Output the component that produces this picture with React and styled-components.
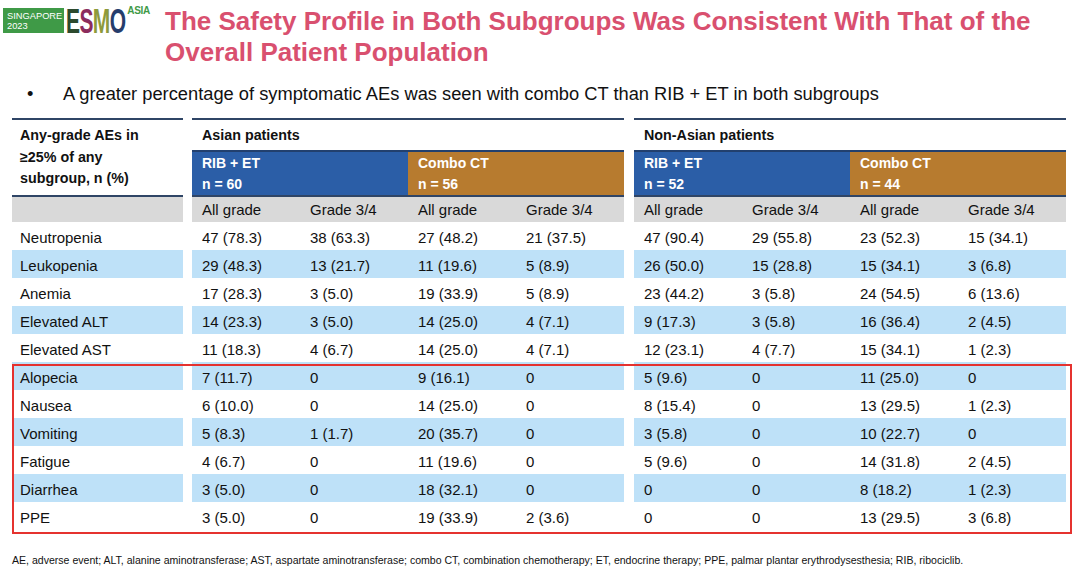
import React from 'react';
import styled, { createGlobalStyle } from 'styled-components';

const GlobalStyle = createGlobalStyle`
  body {
    margin: 0;
    background: #fff;
    font-family: "Liberation Sans", Arial, sans-serif;
    color: #111;
  }
`;

const Page = styled.div`
  width: 1080px;
  height: 571px;
  overflow: hidden;
  position: relative;
`;

const Header = styled.div`
  display: flex;
  align-items: flex-start;
  padding: 6px 0 0 3px;
`;

const Logo = styled.div`
  display: flex;
  align-items: flex-start;
  margin-top: 2px;
  width: 147px;
  flex-shrink: 0;
`;

const CityBox = styled.div`
  width: 64px;
  height: 25px;
  background: #3f9a47;
  color: #fff;
  font-size: 9.3px;
  line-height: 10px;
  padding: 3px 0 0 4px;
  box-sizing: border-box;
`;

const Esmo = styled.div`
  width: 60px;
  height: 25px;
  margin-left: 2px;
  font-size: 35px;
  font-weight: 700;
  line-height: 26px;
  letter-spacing: -1px;
  transform: scaleX(0.6);
  transform-origin: left top;
  white-space: nowrap;
`;

const Letter = styled.span`
  color: ${({ $c }) => $c};
`;

const AsiaTag = styled.div`
  font-size: 10px;
  font-weight: 700;
  color: #3f9a47;
  margin: -3px 0 0 1px;
  letter-spacing: -0.3px;
`;

const Title = styled.h1`
  margin: 0 0 0 15px;
  font-size: 26px;
  line-height: 31px;
  font-weight: 700;
  color: #d9506f;
`;

const Bullet = styled.div`
  display: flex;
  margin: 15px 0 0 27px;
  font-size: 18.3px;
  line-height: 22px;
`;

const Dot = styled.span`
  width: 36px;
`;

const Table = styled.div`
  position: relative;
  margin: 13px 0 0 12px;
  width: 1054px;
`;

const HeadRow = styled.div`
  display: flex;
`;

const LabelHead = styled.div`
  width: 171px;
  display: flex;
  flex-direction: column;
  border-top: 2px solid #2f4566;
  margin-right: 9px;
`;

const LabelText = styled.div`
  height: 75px;
  padding: 5px 0 0 8px;
  box-sizing: border-box;
  font-size: 14.3px;
  font-weight: 700;
  line-height: 21.5px;
`;

const Group = styled.div`
  width: 432px;
  border-top: 2px solid #2f4566;
  margin-right: ${({ $gap }) => $gap || 0}px;
`;

const GroupTitle = styled.div`
  height: 30px;
  padding: 1px 0 0 10px;
  box-sizing: border-box;
  font-size: 14.3px;
  font-weight: 700;
  line-height: 28px;
`;

const Arms = styled.div`
  display: flex;
  border-top: 2px solid #22406e;
`;

const Arm = styled.div`
  width: 216px;
  height: 43px;
  background: ${({ $tone }) => ($tone === 'ct' ? '#b77b2f' : '#2b5ea7')};
  color: #fff;
  font-size: 14px;
  font-weight: 700;
  line-height: 21px;
  padding: 1px 0 0 10px;
  box-sizing: border-box;
`;

const SubRow = styled.div`
  display: grid;
  grid-template-columns: repeat(4, 108px);
  height: 27px;
  border-top: 2px solid #2f4566;
  background: #d9d9d9;
  box-sizing: border-box;
`;

const SubGray = styled.div`
  height: 27px;
  border-top: 2px solid #2f4566;
  background: #d9d9d9;
  box-sizing: border-box;
`;

const SubCell = styled.div`
  padding: 1px 0 0 10px;
  font-size: 15px;
  line-height: 24px;
`;

const DataRow = styled.div`
  display: grid;
  grid-template-columns: 171px 9px repeat(4, 108px) 10px repeat(4, 108px);
  height: 28px;
`;

const Cell = styled.div`
  background: ${({ $band }) => ($band ? '#bee1f8' : 'transparent')};
  padding: 3px 0 0 ${({ $label }) => ($label ? 8 : 10)}px;
  box-sizing: border-box;
  font-size: 15px;
  line-height: 25px;
  white-space: nowrap;
`;

const Highlight = styled.div`
  position: absolute;
  left: 0;
  top: 142px;
  width: 1060px;
  height: 170px;
  border: 2.5px solid #e5322f;
  box-sizing: border-box;
  pointer-events: none;
`;

const Body = styled.div`
  position: relative;
`;

const Footnote = styled.div`
  margin: 23px 0 0 12px;
  font-size: 10.55px;
  line-height: 14px;
  color: #111;
  white-space: nowrap;
`;

const rows = [
  ['Neutropenia', '47 (78.3)', '38 (63.3)', '27 (48.2)', '21 (37.5)', '47 (90.4)', '29 (55.8)', '23 (52.3)', '15 (34.1)'],
  ['Leukopenia', '29 (48.3)', '13 (21.7)', '11 (19.6)', '5 (8.9)', '26 (50.0)', '15 (28.8)', '15 (34.1)', '3 (6.8)'],
  ['Anemia', '17 (28.3)', '3 (5.0)', '19 (33.9)', '5 (8.9)', '23 (44.2)', '3 (5.8)', '24 (54.5)', '6 (13.6)'],
  ['Elevated ALT', '14 (23.3)', '3 (5.0)', '14 (25.0)', '4 (7.1)', '9 (17.3)', '3 (5.8)', '16 (36.4)', '2 (4.5)'],
  ['Elevated AST', '11 (18.3)', '4 (6.7)', '14 (25.0)', '4 (7.1)', '12 (23.1)', '4 (7.7)', '15 (34.1)', '1 (2.3)'],
  ['Alopecia', '7 (11.7)', '0', '9 (16.1)', '0', '5 (9.6)', '0', '11 (25.0)', '0'],
  ['Nausea', '6 (10.0)', '0', '14 (25.0)', '0', '8 (15.4)', '0', '13 (29.5)', '1 (2.3)'],
  ['Vomiting', '5 (8.3)', '1 (1.7)', '20 (35.7)', '0', '3 (5.8)', '0', '10 (22.7)', '0'],
  ['Fatigue', '4 (6.7)', '0', '11 (19.6)', '0', '5 (9.6)', '0', '14 (31.8)', '2 (4.5)'],
  ['Diarrhea', '3 (5.0)', '0', '18 (32.1)', '0', '0', '0', '8 (18.2)', '1 (2.3)'],
  ['PPE', '3 (5.0)', '0', '19 (33.9)', '2 (3.6)', '0', '0', '13 (29.5)', '3 (6.8)'],
];

const groups = [
  { name: 'Asian patients', arms: [['RIB + ET', 'n = 60', 'rib'], ['Combo CT', 'n = 56', 'ct']], gap: 10 },
  { name: 'Non-Asian patients', arms: [['RIB + ET', 'n = 52', 'rib'], ['Combo CT', 'n = 44', 'ct']], gap: 0 },
];

const subs = ['All grade', 'Grade 3/4', 'All grade', 'Grade 3/4'];

const TableRow = ({ row, band }) => {
  const [label, ...vals] = row;
  return (
    <DataRow>
      <Cell $label $band={band}>{label}</Cell>
      <div />
      {vals.slice(0, 4).map((v, i) => (
        <Cell key={i} $band={band}>{v}</Cell>
      ))}
      <div />
      {vals.slice(4).map((v, i) => (
        <Cell key={i + 4} $band={band}>{v}</Cell>
      ))}
    </DataRow>
  );
};

export default function App() {
  return (
    <Page>
      <GlobalStyle />
      <Header>
        <Logo>
          <CityBox>
            SINGAPORE
            <br />
            2023
          </CityBox>
          <Esmo>
            <Letter $c="#2c4a2e">E</Letter>
            <Letter $c="#8c2c5d">S</Letter>
            <Letter $c="#8e9a3b">M</Letter>
            <Letter $c="#263d6c">O</Letter>
          </Esmo>
          <AsiaTag>ASIA</AsiaTag>
        </Logo>
        <Title>
          The Safety Profile in Both Subgroups Was Consistent With That of the
          <br />
          Overall Patient Population
        </Title>
      </Header>

      <Bullet>
        <Dot>•</Dot>
        <span>A greater percentage of symptomatic AEs was seen with combo CT than RIB + ET in both subgroups</span>
      </Bullet>

      <Table>
        <HeadRow>
          <LabelHead>
            <LabelText>
              Any-grade AEs in
              <br />
              ≥25% of any
              <br />
              subgroup, n (%)
            </LabelText>
            <SubGray />
          </LabelHead>
          {groups.map((g) => (
            <Group key={g.name} $gap={g.gap}>
              <GroupTitle>{g.name}</GroupTitle>
              <Arms>
                {g.arms.map(([a, n, tone]) => (
                  <Arm key={a} $tone={tone}>
                    {a}
                    <br />
                    {n}
                  </Arm>
                ))}
              </Arms>
              <SubRow>
                {subs.map((s, i) => (
                  <SubCell key={i}>{s}</SubCell>
                ))}
              </SubRow>
            </Group>
          ))}
        </HeadRow>
        <Body>
          {rows.map((r, i) => (
            <TableRow key={r[0]} row={r} band={i % 2 === 1} />
          ))}
          <Highlight />
        </Body>
      </Table>

      <Footnote>
        AE, adverse event; ALT, alanine aminotransferase; AST, aspartate aminotransferase; combo CT, combination
        chemotherapy; ET, endocrine therapy; PPE, palmar plantar erythrodysesthesia; RIB, ribociclib.
      </Footnote>
    </Page>
  );
}
